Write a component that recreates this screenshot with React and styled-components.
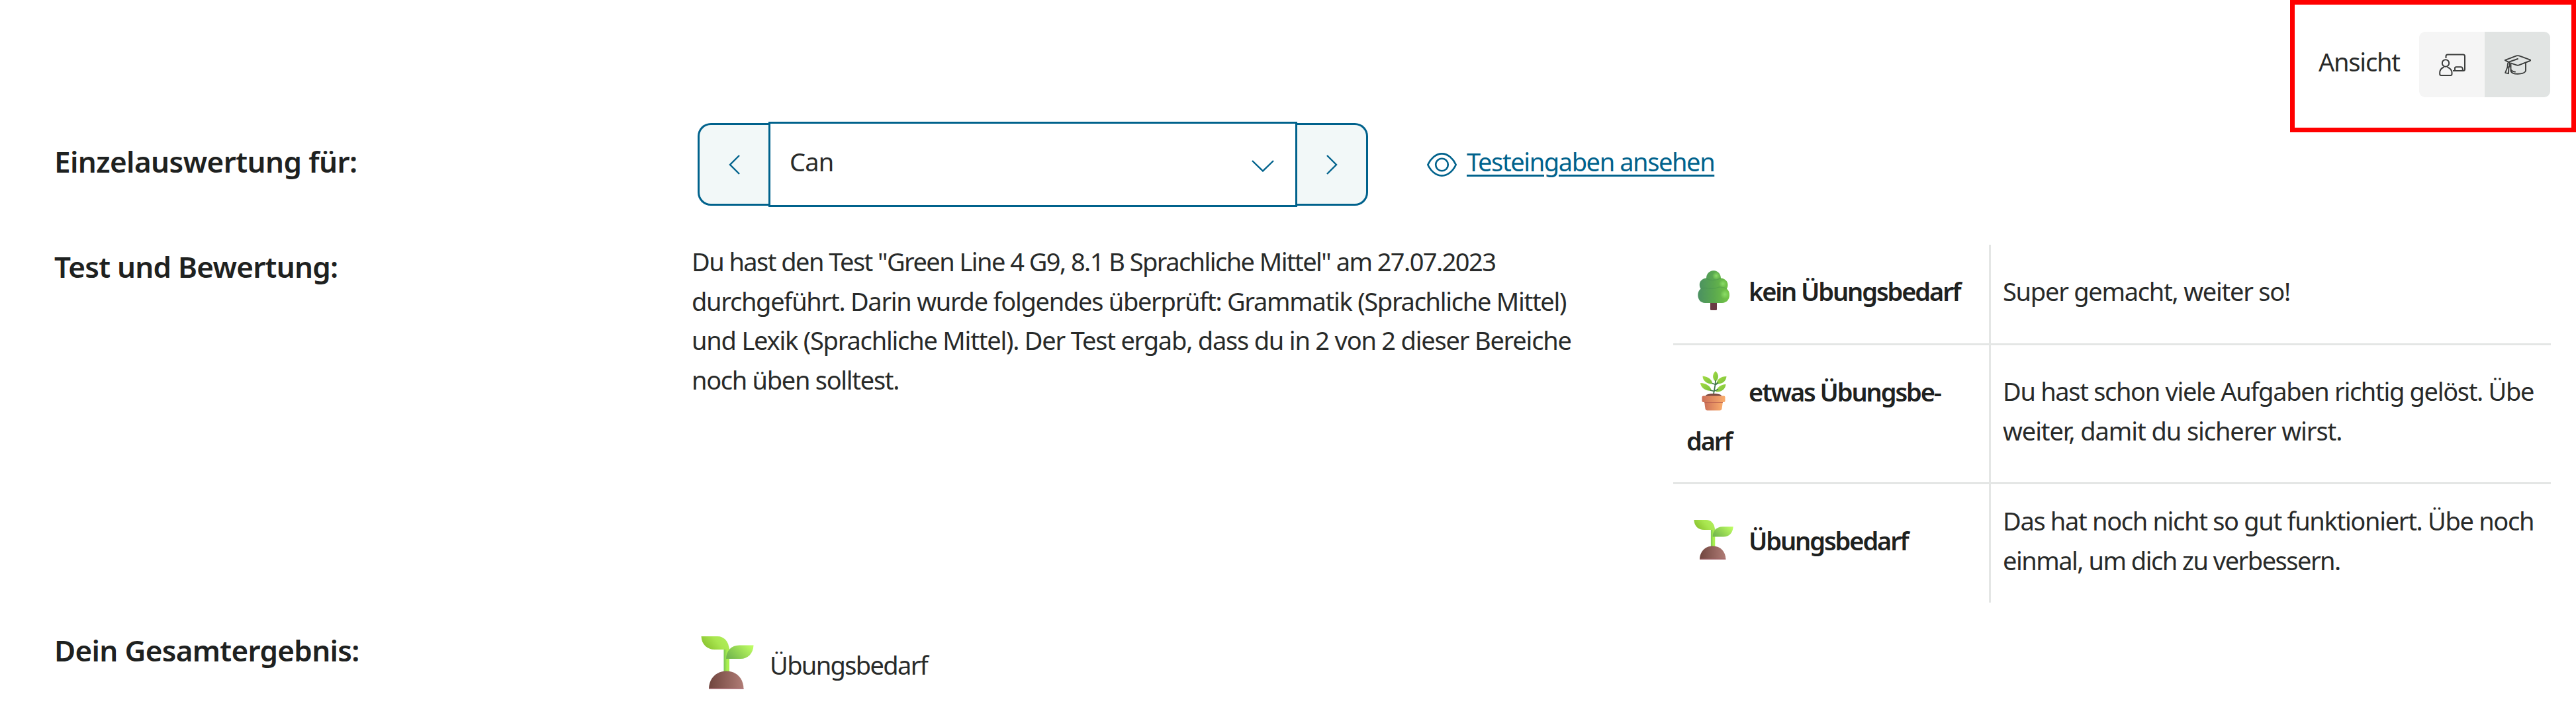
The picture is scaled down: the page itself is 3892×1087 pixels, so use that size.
import React from "react";
import styled, { createGlobalStyle } from "styled-components";

const colors = {
  text: "#282a29",
  heading: "#1e2120",
  petrol: "#00628c",
  mint: "#f2f8f8",
  line: "#e4e6e5",
  red: "#ff0000",
};

const GlobalStyle = createGlobalStyle`
  * {
    box-sizing: border-box;
  }

  body {
    margin: 0;
    background: #fff;
    color: ${colors.text};
    font-family: "Noto Sans", "Open Sans", sans-serif;
    font-size: 38px;
    line-height: 60px;
  }

  svg {
    display: block;
    flex-shrink: 0;
  }
`;

const Page = styled.main`
  width: 3892px;
  height: 1087px;
  overflow: hidden;
`;

const Header = styled.header`
  display: flex;
  justify-content: flex-end;
`;

const ViewSwitch = styled.div`
  display: flex;
  justify-content: space-between;
  width: 432px;
  height: 200px;
  padding: 41px 32px 0 36px;
  border: 7px solid ${colors.red};
`;

const SwitchLabel = styled.span`
  padding-top: 15px;
  letter-spacing: -1.2px;
`;

const SwitchButtons = styled.div`
  display: flex;
  height: 99px;
  border-radius: 9px;
  overflow: hidden;
`;

const SwitchButton = styled.button`
  display: flex;
  align-items: center;
  justify-content: center;
  width: 99px;
  padding: 0;
  border: 0;
  background: ${(p) => (p.$active ? "#e1e4e3" : "#f5f5f5")};
`;

const Content = styled.div`
  margin: -16px 38px 0 81px;
`;

const Row = styled.section`
  display: grid;
  grid-template-columns: 964px 1483px 1326px;
  align-items: start;
  margin-top: ${(p) => p.$gap || 0}px;
`;

const Heading = styled.h2`
  margin: ${(p) => p.$offset || 0}px 0 0 1px;
  color: ${colors.heading};
  font-size: 44px;
  font-weight: 600;
  line-height: 60px;
  letter-spacing: ${(p) => p.$track}px;
`;

const Controls = styled.div`
  display: flex;
  align-items: center;
  height: 129px;
  padding-left: 9px;
`;

const StepButton = styled.button`
  display: flex;
  flex-shrink: 0;
  align-items: center;
  justify-content: center;
  width: 107px;
  height: 125px;
  padding: 0;
  border: 3px solid ${colors.petrol};
  border-width: ${(p) => (p.$side === "left" ? "3px 0 3px 3px" : "3px 3px 3px 0")};
  border-radius: ${(p) => (p.$side === "left" ? "20px 0 0 20px" : "0 20px 20px 0")};
  background: ${colors.mint};
`;

const Select = styled.div`
  display: flex;
  flex-shrink: 0;
  align-items: center;
  justify-content: space-between;
  width: 799px;
  height: 129px;
  padding: 0 32px 0 29px;
  border: 3px solid ${colors.petrol};

  svg {
    margin-top: 4px;
  }
`;

const SelectValue = styled.span`
  padding-bottom: 9px;
  letter-spacing: -0.8px;
`;

const InputsLink = styled.a`
  display: flex;
  align-items: center;
  margin-left: 89px;
  color: ${colors.petrol};
`;

const LinkText = styled.span`
  margin: 0 0 9px 15px;
  letter-spacing: -1.4px;
  white-space: nowrap;
  text-decoration: underline;
  text-decoration-thickness: 3px;
  text-underline-offset: 5px;
`;

const Summary = styled.p`
  margin: 1px 0 0;
  line-height: 59.5px;
`;

const Line = styled.span`
  display: block;
  white-space: nowrap;
  letter-spacing: ${(p) => p.$track}px;
`;

const Legend = styled.div`
  margin-top: 5px;
`;

const LegendRow = styled.div`
  display: grid;
  grid-template-columns: 480px 1fr;
  height: ${(p) => p.$height}px;

  &:not(:last-child) {
    border-bottom: 3px solid ${colors.line};
  }
`;

const LegendName = styled.div`
  padding: ${(p) => p.$top}px 0 0 20px;
  border-right: 3px solid ${colors.line};
  color: ${colors.heading};
  font-weight: 600;
  line-height: 74px;
  letter-spacing: -2.1px;
  white-space: nowrap;

  svg {
    display: inline-block;
    margin: 0 23px 0 11px;
    vertical-align: -14px;
  }
`;

const LegendText = styled.div`
  padding: ${(p) => p.$top}px 0 0 18px;
`;

const Result = styled.div`
  display: flex;
  padding: 9px 0 0 14px;
`;

const ResultText = styled.span`
  margin: 13px 0 0 24px;
  letter-spacing: -1.65px;
`;

function TeacherIcon() {
  return (
    <svg width="40" height="34" viewBox="0 0 40 34" fill="none" stroke="#3c3e3d" strokeWidth="2">
      <path d="M10.5 7V4Q10.5 1.4 13 1.4H36.5Q39 1.4 39 4V23.5Q39 26 36.5 26H21" />
      <path d="M24 26V22Q24 20.3 26 20.3H33Q35 20.3 35.5 22L36 26" />
      <circle cx="10" cy="14.5" r="5.2" />
      <path d="M7.5 20.5C3.5 22 1.2 25 1.2 29V31Q1.2 33 3.2 33H17.5Q19.5 33 19.5 31V29C19.5 25 16.5 22 12.5 20.5" />
    </svg>
  );
}

function GraduationIcon() {
  return (
    <svg
      width="40"
      height="30"
      viewBox="0 0 40 30"
      fill="none"
      stroke="#3c3e3d"
      strokeWidth="1.9"
      strokeLinejoin="round"
      strokeLinecap="round"
    >
      <path d="M1 7.8L18 1.4Q20 .8 22 1.4L39 7.6Q39.6 8.4 38.5 9L22 15.4Q20 16.2 18 15.4L10 12.6" />
      <path d="M1 8.2L6 10.8L20 6M6 10.8Q4.4 13 4.6 18L1.2 27L6 28.2L6.4 18.5L4.6 18M7.8 11.5V18" />
      <path d="M9.5 14V24.5Q11 28.8 20 28.8Q30 28.8 32 24V12.6M9.8 22.5Q12 25.4 16 25.6" />
    </svg>
  );
}

function Chevron({ d, width, height }) {
  return (
    <svg
      width={width}
      height={height}
      viewBox={`0 0 ${width} ${height}`}
      fill="none"
      stroke={colors.petrol}
      strokeWidth="2.4"
    >
      <path d={d} />
    </svg>
  );
}

function EyeIcon() {
  return (
    <svg width="45" height="36" viewBox="0 0 45 36" fill="none" stroke={colors.petrol} strokeWidth="2.6">
      <path d="M1.3 18C5 9.5 13 1.4 22.5 1.4S40 9.5 43.7 18C40 26.5 32 34.6 22.5 34.6S5 26.5 1.3 18Z" />
      <circle cx="22.5" cy="18" r="9.3" />
    </svg>
  );
}

function TreeIcon() {
  return (
    <svg width="60" height="60" viewBox="0 0 60 60">
      <defs>
        <linearGradient id="crown" x1="0" y1="0" x2="1" y2="0">
          <stop offset="0" stopColor="#4b9062" />
          <stop offset=".5" stopColor="#5aa84f" />
          <stop offset="1" stopColor="#74c644" />
        </linearGradient>
        <radialGradient id="glow">
          <stop offset="0" stopColor="#8bdc66" />
          <stop offset="1" stopColor="#8bdc66" stopOpacity="0" />
        </radialGradient>
      </defs>
      <rect x="25" y="46" width="10" height="14" rx="1.5" fill="#6a3b45" />
      <path
        d="M30 0C36 0 41 5 41 11.5C47 12 51.5 16 51.5 21.5C51.5 24 51 26 49.8 27.5C52.5 29.5 54 33 54 37C54 44 49.5 49 43 49H17C10.5 49 6.3 44 6.3 37C6.3 33 8 29.5 10.6 27.5C9.4 26 8.8 24 8.8 21.5C8.8 16 13 12 19 11.5C19 5 24 0 30 0Z"
        fill="url(#crown)"
      />
      <path
        d="M19 11.5C23 16 35 15 41 11.5M10.6 27.5C20 24 26 30 35 26C40 23.5 45 25 49.8 27.5"
        fill="none"
        stroke="#438a4c"
        strokeWidth="1.2"
        opacity=".35"
      />
      <circle cx="34" cy="8" r="6" fill="url(#glow)" />
      <circle cx="44" cy="20" r="6" fill="url(#glow)" />
      <circle cx="47" cy="36" r="7" fill="url(#glow)" />
    </svg>
  );
}

function PlantIcon() {
  return (
    <svg width="60" height="60" viewBox="0 0 60 60">
      <defs>
        <linearGradient id="pot" x1="0" y1="0" x2="1" y2="0">
          <stop offset="0" stopColor="#cc7058" />
          <stop offset="1" stopColor="#fbae6d" />
        </linearGradient>
        <linearGradient id="foliage" x1="0" y1="0" x2="1" y2="1">
          <stop offset="0" stopColor="#a4dc42" />
          <stop offset="1" stopColor="#78c03c" />
        </linearGradient>
      </defs>
      <g fill="url(#foliage)">
        <path d="M33 0C27.5 5 28 12 33 16C38 12 38.5 5 33 0Z" />
        <path d="M13.5 7.5C13.5 15 20 19.5 28.5 19.5C27.5 12 21 8.5 13.5 7.5Z" />
        <path d="M10 18C11 26 18 30 27 30C25.5 22.5 19 18.5 10 18Z" />
        <path d="M49.5 8C41 8 35.5 12 34 19.5C43 20 49 15.5 49.5 8Z" />
        <path d="M48.5 20C40.5 20.5 35.5 24 33.5 31.5C41.5 32 48 27.5 48.5 20Z" />
      </g>
      <path
        d="M30 37C30 29 33 25 33 14M33 20.5L28 18.5M31 30.5L25 29M32.5 21L37 17.5M31.5 30L37 27.5"
        fill="none"
        stroke="#3d7546"
        strokeWidth="1.8"
      />
      <ellipse cx="30" cy="37" rx="12" ry="3" fill="#7b4a41" />
      <path d="M16 46H44L42.5 57Q42 59.5 39.5 59.5H20.5Q18 59.5 17.5 57Z" fill="url(#pot)" />
      <rect x="12.5" y="37.5" width="35" height="9.5" rx="2" fill="url(#pot)" />
      <path d="M16 47.5H44" stroke="#b9604f" strokeWidth="1" opacity=".7" />
    </svg>
  );
}

function SeedlingIcon({ size = 60 }) {
  return (
    <svg width={size} height={size} viewBox="0 0 80 80">
      <defs>
        <linearGradient id="leafLeft" x1="0" y1=".7" x2="1" y2=".3">
          <stop offset="0" stopColor="#86bf2d" />
          <stop offset=".6" stopColor="#a9e64f" />
          <stop offset="1" stopColor="#b0ee5a" />
        </linearGradient>
        <linearGradient id="leafRight" x1="0" y1=".7" x2="1" y2=".2">
          <stop offset="0" stopColor="#74b84e" />
          <stop offset=".5" stopColor="#98d955" />
          <stop offset="1" stopColor="#bdfc64" />
        </linearGradient>
        <linearGradient id="stem" x1="0" y1="0" x2="1" y2="0">
          <stop offset="0" stopColor="#79c552" />
          <stop offset=".6" stopColor="#aaf04f" />
        </linearGradient>
        <linearGradient id="soil" x1="0" y1="0" x2="1" y2="0">
          <stop offset="0" stopColor="#70453e" />
          <stop offset="1" stopColor="#b07c76" />
        </linearGradient>
      </defs>
      <path d="M34.5 17H43V55H34.5Z" fill="url(#stem)" />
      <path d="M.5 0H25C35 0 42.5 8 42.5 20H21C9 20 1 12 .5 0Z" fill="url(#leafLeft)" />
      <path d="M38 34C38 22 46 13.5 58 13.5H79.5C79 26 71 34 60 34Z" fill="url(#leafRight)" />
      <path d="M12 79.5C12 64 23 52.5 38.5 52.5S64.5 64 64.5 79.5Z" fill="url(#soil)" />
      <path d="M12 78.8H64.5" stroke="#a5606c" strokeWidth="1.4" opacity=".7" />
    </svg>
  );
}

export default function App() {
  return (
    <Page>
      <GlobalStyle />

      <Header>
        <ViewSwitch>
          <SwitchLabel>Ansicht</SwitchLabel>
          <SwitchButtons>
            <SwitchButton>
              <TeacherIcon />
            </SwitchButton>
            <SwitchButton $active>
              <GraduationIcon />
            </SwitchButton>
          </SwitchButtons>
        </ViewSwitch>
      </Header>

      <Content>
        <Row>
          <Heading $offset={30} $track={-0.6}>
            Einzelauswertung für:
          </Heading>
          <Controls>
            <StepButton $side="left">
              <Chevron width={17} height={30} d="M16 1L2 15L16 29" />
            </StepButton>
            <Select>
              <SelectValue>Can</SelectValue>
              <Chevron width={34} height={18} d="M1 1L17 16.5L33 1" />
            </Select>
            <StepButton $side="right">
              <Chevron width={17} height={30} d="M1 1L15 15L1 29" />
            </StepButton>
            <InputsLink>
              <EyeIcon />
              <LinkText>Testeingaben ansehen</LinkText>
            </InputsLink>
          </Controls>
        </Row>

        <Row $gap={52}>
          <Heading $offset={8} $track={-0.75}>
            Test und Bewertung:
          </Heading>
          <Summary>
            <Line $track={-1.56}>
              Du hast den Test "Green Line 4 G9, 8.1 B Sprachliche Mittel" am 27.07.2023
            </Line>
            <Line $track={-1.28}>
              durchgeführt. Darin wurde folgendes überprüft: Grammatik (Sprachliche Mittel)
            </Line>
            <Line $track={-1.21}>
              und Lexik (Sprachliche Mittel). Der Test ergab, dass du in 2 von 2 dieser Bereiche
            </Line>
            <Line $track={-1.3}>noch üben solltest.</Line>
          </Summary>
          <Legend>
            <LegendRow $height={152}>
              <LegendName $top={33}>
                <TreeIcon />
                kein Übungsbedarf
              </LegendName>
              <LegendText $top={40}>
                <Line $track={-1.25}>Super gemacht, weiter so!</Line>
              </LegendText>
            </LegendRow>
            <LegendRow $height={210}>
              <LegendName $top={33}>
                <PlantIcon />
                etwas Übungsbe-
                <br />
                darf
              </LegendName>
              <LegendText $top={39}>
                <Line $track={-1.32}>Du hast schon viele Aufgaben richtig gelöst. Übe</Line>
                <Line $track={-1.08}>weiter, damit du sicherer wirst.</Line>
              </LegendText>
            </LegendRow>
            <LegendRow $height={179}>
              <LegendName $top={48}>
                <SeedlingIcon />
                Übungsbedarf
              </LegendName>
              <LegendText $top={25}>
                <Line $track={-1.32}>Das hat noch nicht so gut funktioniert. Übe noch</Line>
                <Line $track={-1.5}>einmal, um dich zu verbessern.</Line>
              </LegendText>
            </LegendRow>
          </Legend>
        </Row>

        <Row $gap={42}>
          <Heading $track={-0.7}>Dein Gesamtergebnis:</Heading>
          <Result>
            <SeedlingIcon size={80} />
            <ResultText>Übungsbedarf</ResultText>
          </Result>
        </Row>
      </Content>
    </Page>
  );
}
